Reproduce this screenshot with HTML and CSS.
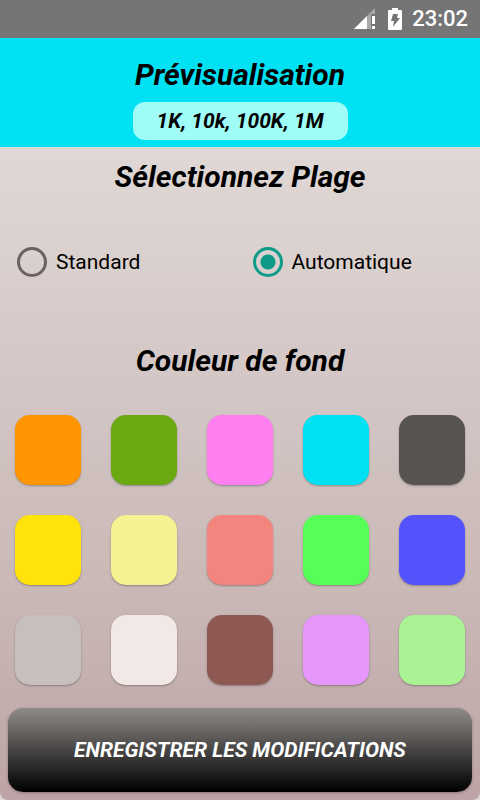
FILE: index.html
```
<!DOCTYPE html>
<html lang="fr">
<head>
    <meta charset="UTF-8">
    <meta name="viewport" content="width=device-width, initial-scale=1.0">
    <title>Préférences</title>
    <link rel="stylesheet" href="styles.css">
</head>
<body>
    <div class="status-bar">
        <svg class="signal" width="22" height="22" viewBox="0 0 22 22">
            <path d="M21 0V6H17V21H0Z" fill="#a9a9a9"/>
            <path d="M0 21L13 8V21Z" fill="#fff"/>
            <path d="M18 8h3v8h-3zM18 18h3v3h-3z" fill="#fff"/>
        </svg>
        <svg class="battery" width="14" height="22" viewBox="0 0 14 22">
            <path d="M4 0H10V2H13Q14 2 14 3V21Q14 22 13 22H1Q0 22 0 21V3Q0 2 1 2H4Z" fill="#fff"/>
            <path d="M5 6H10L9 10H12L5 19L6 13H3Z" fill="#757575"/>
        </svg>
        <span class="clock">23:02</span>
    </div>
    <header class="preview">
        <h1 class="title">Prévisualisation</h1>
        <p class="sample">1K, 10k, 100K, 1M</p>
    </header>
    <main class="settings">
        <h2 class="title">Sélectionnez Plage</h2>
        <div class="options">
            <label class="option"><input type="radio" name="plage" value="standard">Standard</label>
            <label class="option"><input type="radio" name="plage" value="auto" checked>Automatique</label>
        </div>
        <h2 class="title">Couleur de fond</h2>
        <div class="colors">
            <button class="color orange" type="button" aria-label="Orange"></button>
            <button class="color green" type="button" aria-label="Vert"></button>
            <button class="color pink" type="button" aria-label="Rose"></button>
            <button class="color cyan" type="button" aria-label="Cyan"></button>
            <button class="color dark" type="button" aria-label="Gris foncé"></button>
            <button class="color yellow" type="button" aria-label="Jaune"></button>
            <button class="color cream" type="button" aria-label="Crème"></button>
            <button class="color salmon" type="button" aria-label="Saumon"></button>
            <button class="color lime" type="button" aria-label="Vert vif"></button>
            <button class="color blue" type="button" aria-label="Bleu"></button>
            <button class="color grey" type="button" aria-label="Gris"></button>
            <button class="color white" type="button" aria-label="Blanc"></button>
            <button class="color brown" type="button" aria-label="Marron"></button>
            <button class="color violet" type="button" aria-label="Violet"></button>
            <button class="color mint" type="button" aria-label="Menthe"></button>
        </div>
        <button class="save" type="button">ENREGISTRER LES MODIFICATIONS</button>
    </main>
</body>
</html>
```
FILE: styles.css
```
* {
    box-sizing: border-box;
}

body {
    margin: 0;
    min-height: 100vh;
    display: flex;
    flex-direction: column;
    font-family: Roboto, sans-serif;
    color: #000;
    background-color: #e0d8d6;
}

.status-bar {
    display: flex;
    align-items: center;
    justify-content: flex-end;
    height: 38px;
    padding: 0 12px;
    background-color: #757575;
    color: #fff;
}

.battery {
    margin: 0 10px 0 12px;
}

.clock {
    font-size: 22px;
    line-height: 28px;
    font-weight: 500;
}

.preview {
    display: flex;
    flex-direction: column;
    align-items: center;
    padding: 17px 8px 7px;
    background-color: #00e1f4;
}

.title {
    margin: 0;
    font-size: 30px;
    line-height: 40px;
    font-weight: bold;
    font-style: italic;
    text-align: center;
}

.sample {
    margin: 7px 0 0;
    padding: 0 24px;
    border-radius: 12px;
    background-color: #9ffcf7;
    font-size: 21px;
    line-height: 38px;
    font-weight: bold;
    font-style: italic;
}

.settings {
    flex: 1;
    display: flex;
    flex-direction: column;
    padding: 10px 8px 8px;
    border-radius: 0 0 8px 8px;
    background: linear-gradient(#e0d8d6, #c8b7b5 70%, #bea4a6);
}

.options {
    display: grid;
    grid-template-columns: 1fr 1fr;
    gap: 16px;
    padding: 50px 0 64px 9px;
}

.option {
    display: flex;
    align-items: center;
    gap: 9px;
    font-size: 21px;
    line-height: 30px;
}

.option input {
    appearance: none;
    width: 30px;
    height: 30px;
    margin: 0;
    border: 3px solid #6b6161;
    border-radius: 50%;
}

.option input:checked {
    border-color: #0d9a88;
    background: radial-gradient(circle, #0d9a88 7px, transparent 8px);
}

.colors {
    display: grid;
    grid-template-columns: repeat(5, 1fr);
    gap: 30px;
    padding: 34px 7px 23px;
}

.color {
    height: 70px;
    padding: 0;
    border: none;
    border-radius: 15px;
    box-shadow: 0 1px 2px rgba(0, 0, 0, 0.3);
}

.orange { background-color: #ff9500; }
.green { background-color: #6aa912; }
.pink { background-color: #ff7ff0; }
.cyan { background-color: #00e1f4; }
.dark { background-color: #575351; }
.yellow { background-color: #ffe30c; }
.cream { background-color: #f3f391; }
.salmon { background-color: #f3857e; }
.lime { background-color: #55ff58; }
.blue { background-color: #5352fb; }
.grey { background-color: #c7bfbd; }
.white { background-color: #f2e9e7; }
.brown { background-color: #8d5952; }
.violet { background-color: #e697fb; }
.mint { background-color: #abf294; }

.save {
    height: 84px;
    border: none;
    border-radius: 15px;
    background: linear-gradient(#8f8b88, #000);
    box-shadow: 0 1px 3px rgba(0, 0, 0, 0.3);
    color: #fff;
    font-family: inherit;
    font-size: 21px;
    font-weight: bold;
    font-style: italic;
}
```
